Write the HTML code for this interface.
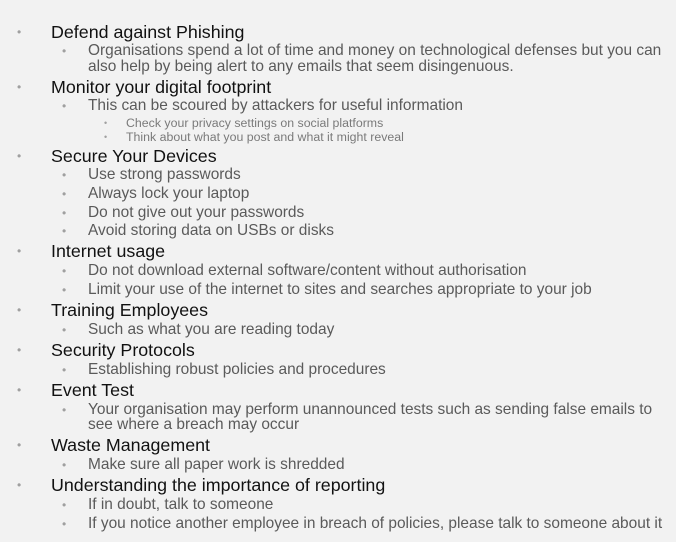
<!DOCTYPE html>
<html><head><meta charset="utf-8"><style>
html,body{margin:0;padding:0}
body{width:676px;height:542px;background:#f2f2f2;position:relative;overflow:hidden;font-family:"Liberation Sans",sans-serif}
div{position:absolute;white-space:nowrap;height:20px;line-height:20px;margin-top:1px}
.a{left:51px;font-size:17.85px;color:#111}
.b{left:88px;font-size:15.45px;color:#5a5a5a}
.c{left:126px;font-size:12.35px;color:#7a7a7a;height:14px;line-height:14px}
.a:before,.b:before,.c:before{content:"•";position:absolute;color:#a0a0a0}
.a:before{left:-34px;font-size:12px}
.b:before{left:-26px;font-size:12px}
.c:before{left:-22px;font-size:9px}
.n:before{content:none}
</style></head><body>
<div class="a" style="top:21px">Defend against Phishing</div>
<div class="b" style="top:40px">Organisations spend a lot of time and money on technological defenses but you can</div>
<div class="b n" style="top:56px">also help by being alert to any emails that seem disingenuous.</div>
<div class="a" style="top:76px">Monitor your digital footprint</div>
<div class="b" style="top:95px">This can be scoured by attackers for useful information</div>
<div class="c" style="top:115px">Check your privacy settings on social platforms</div>
<div class="c" style="top:129px">Think about what you post and what it might reveal</div>
<div class="a" style="top:145px">Secure Your Devices</div>
<div class="b" style="top:164px">Use strong passwords</div>
<div class="b" style="top:183px">Always lock your laptop</div>
<div class="b" style="top:202px">Do not give out your passwords</div>
<div class="b" style="top:220px">Avoid storing data on USBs or disks</div>
<div class="a" style="top:240px">Internet usage</div>
<div class="b" style="top:260px">Do not download external software/content without authorisation</div>
<div class="b" style="top:279px">Limit your use of the internet to sites and searches appropriate to your job</div>
<div class="a" style="top:299px">Training Employees</div>
<div class="b" style="top:319px">Such as what you are reading today</div>
<div class="a" style="top:339px">Security Protocols</div>
<div class="b" style="top:359px">Establishing robust policies and procedures</div>
<div class="a" style="top:379px">Event Test</div>
<div class="b" style="top:399px">Your organisation may perform unannounced tests such as sending false emails to</div>
<div class="b n" style="top:414px">see where a breach may occur</div>
<div class="a" style="top:434px">Waste Management</div>
<div class="b" style="top:454px">Make sure all paper work is shredded</div>
<div class="a" style="top:474px">Understanding the importance of reporting</div>
<div class="b" style="top:494px">If in doubt, talk to someone</div>
<div class="b" style="top:513px">If you notice another employee in breach of policies, please talk to someone about it</div>
</body></html>
